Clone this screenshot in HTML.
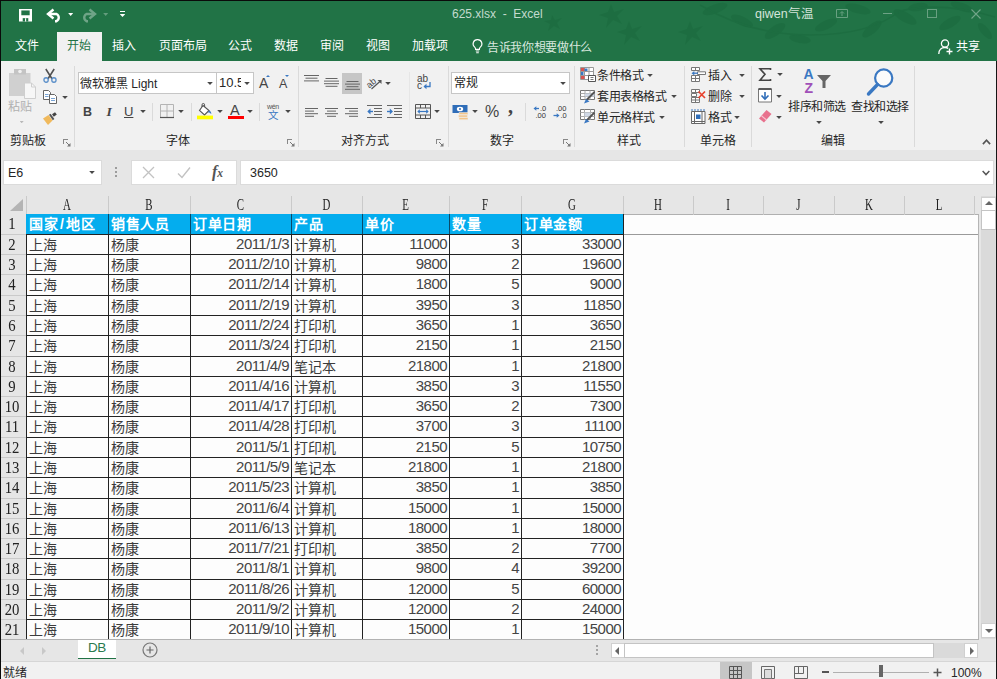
<!DOCTYPE html>
<html lang="zh-CN">
<head>
<meta charset="utf-8">
<title>625.xlsx - Excel</title>
<style>
*{box-sizing:border-box;margin:0;padding:0}
html,body{width:997px;height:679px;overflow:hidden;background:#e6e6e6}
body{position:relative;font-family:"Liberation Sans",sans-serif;font-size:12px;color:#262626}
.a{position:absolute}
.t{position:absolute;white-space:nowrap;font-size:12px;line-height:16px;height:16px;color:#262626;overflow:visible}
.w{color:#fff}
.sep{position:absolute;width:1px;background:#dadada}
.box{position:absolute;background:#fff;border:1px solid #c6c6c6}
svg{position:absolute;overflow:visible}
.dd{position:absolute;width:5.600px;height:3.100px;margin-left:.2px;background:#484848;clip-path:polygon(0 0,100% 0,50% 100%)}
.ch{text-align:center;font-family:"Liberation Serif",serif;font-size:16px;color:#222;transform:scaleX(.68)}
.rn{text-align:center;font-family:"Liberation Serif",serif;font-size:16px;color:#222;transform:scaleX(.92)}
.hc{font-size:14px;letter-spacing:.7px;color:#fff;font-weight:bold;line-height:18px;height:18px}
.c{font-size:14px;color:#3c3c3c;line-height:18px;height:18px}
.r{text-align:right;font-size:15px;letter-spacing:-.55px;color:#444}
.hl{left:26px;width:597px;height:1px;background:#222}
.vl{top:235px;width:1px;height:404px;background:#222}
</style>
</head>
<body>
<!-- ===== title bar + tabs ===== -->
<div class="a" id="titlebar" style="left:0;top:0;width:997px;height:61px;background:#217346"></div>
<div class="a" id="tabactive" style="left:57px;top:32px;width:45px;height:30px;background:#f1f1f1"></div>
<div class="t w" style="left:452px;top:6px;font-size:12px;color:#c4dbce">625.xlsx&nbsp; -&nbsp; Excel</div>
<div class="t w" style="left:755px;top:6px;font-size:12.5px;color:#d3e4da">qiwen气温</div>
<div class="t w" style="left:15px;top:38px">文件</div>
<div class="t" style="left:67px;top:38px;color:#217346">开始</div>
<div class="t w" style="left:112px;top:38px">插入</div>
<div class="t w" style="left:159px;top:38px">页面布局</div>
<div class="t w" style="left:228px;top:38px">公式</div>
<div class="t w" style="left:274px;top:38px">数据</div>
<div class="t w" style="left:320px;top:38px">审阅</div>
<div class="t w" style="left:366px;top:38px">视图</div>
<div class="t w" style="left:412px;top:38px">加载项</div>
<div class="t w" style="left:487px;top:39.500px;letter-spacing:-.35px;color:#d9e8df">告诉我你想要做什么</div>
<div class="t w" style="left:956px;top:39px">共享</div>
<!-- decorative background pattern (birds / leaves) -->
<svg style="left:0;top:1px" width="997" height="60" viewBox="0 0 997 60">
<g fill="#1b6a3e" opacity=".6" style="filter:blur(.7px)">
<!-- birds -->
<path id="bd" d="M552 14l3 5 7-2-5 5 3 6-6-3-6 5 2-7-6-3 7-1z"/>
<path d="M611 3l3 8 10-3-7 7 5 8-9-4-7 8 2-10-9-3 9-3z"/>
<path d="M629 20l3 8 10-3-7 7 5 8-9-4-7 8 2-10-9-3 9-3z"/>
<path d="M690 20l3 8 10-3-7 7 5 8-9-4-7 8 2-10-9-3 9-3z"/>
<!-- leaves -->
<ellipse cx="715" cy="8" rx="13" ry="4.500" transform="rotate(-20 715 8)"/>
<ellipse cx="742" cy="20" rx="12" ry="4.500" transform="rotate(25 742 20)"/>
<ellipse cx="775" cy="30" rx="12" ry="5" transform="rotate(-35 775 30)"/>
<ellipse cx="800" cy="38" rx="11" ry="4" transform="rotate(10 800 38)"/>
<ellipse cx="826" cy="24" rx="12" ry="4.500" transform="rotate(-25 826 24)"/>
<ellipse cx="858" cy="8" rx="13" ry="4.500" transform="rotate(15 858 8)"/>
<ellipse cx="872" cy="28" rx="12" ry="4.500" transform="rotate(-40 872 28)"/>
<ellipse cx="905" cy="16" rx="13" ry="5" transform="rotate(30 905 16)"/>
<ellipse cx="918" cy="6" rx="10" ry="4" transform="rotate(-10 918 6)"/>
<ellipse cx="950" cy="22" rx="12" ry="4.500" transform="rotate(-30 950 22)"/>
<ellipse cx="962" cy="6" rx="12" ry="4" transform="rotate(20 962 6)"/>
<ellipse cx="985" cy="30" rx="10" ry="4" transform="rotate(50 985 30)"/>
<path d="M700 4q50 30 110 30t90-24q40-10 95 6" stroke="#1b6a3e" stroke-width="1.600" fill="none"/>
</g></svg>
<!-- save -->
<svg style="left:19px;top:8.500px" width="13" height="12.500" viewBox="0 0 14 13" preserveAspectRatio="none"><path d="M0 0h14v13H0z" fill="#fff"/><path d="M2.500 1.500h9v5h-9z" fill="#217346"/><path d="M4 9.500h6V13H4z" fill="#217346"/><path d="M6.500 9.500h1.200V13H6.500z" fill="#fff"/></svg>
<!-- undo -->
<svg style="left:47px;top:9px" width="16" height="13" viewBox="0 0 16 13"><path d="M6.500 0.500L1 5l5.500 4.500" fill="none" stroke="#fff" stroke-width="2.400" stroke-linejoin="miter"/><path d="M2 5h7.500a4 4 0 0 1 0 7.200H8" fill="none" stroke="#fff" stroke-width="2.400"/></svg>
<div class="dd" style="left:68px;top:13px;background:#fff;width:5px"></div>
<!-- redo (disabled) -->
<svg style="left:79.500px;top:9px;opacity:.35" width="16" height="13" viewBox="0 0 16 13"><g transform="translate(16,0) scale(-1,1)"><path d="M6.500 0.500L1 5l5.500 4.500" fill="none" stroke="#fff" stroke-width="2.400"/><path d="M2 5h7.500a4 4 0 0 1 0 7.200H8" fill="none" stroke="#fff" stroke-width="2.400"/></g></svg>
<div class="dd" style="left:103px;top:13px;background:#fff;opacity:.3;width:5px"></div>
<!-- customize QAT -->
<div class="a" style="left:120px;top:11px;width:5px;height:1px;background:#fff"></div>
<div class="dd" style="left:119.500px;top:14px;background:#fff"></div>
<!-- bulb -->
<svg style="left:472px;top:39px" width="11" height="15" viewBox="0 0 11 15"><path d="M5.500 .6a4.300 4.300 0 0 0-2.600 7.800c.5.500.7 1.200.7 2h3.800c0-.8.200-1.500.7-2A4.300 4.300 0 0 0 5.500.6z" fill="none" stroke="#fff" stroke-width="1.100"/><path d="M3.800 12h3.400M4.200 13.800h2.600" stroke="#fff" stroke-width="1.100"/></svg>
<!-- share icon -->
<svg style="left:938px;top:39px" width="15" height="16" viewBox="0 0 15 16"><circle cx="7" cy="4.500" r="3.600" fill="none" stroke="#fff" stroke-width="1.300"/><path d="M.8 15c0-4.500 3-6.500 6.200-6.500 1.200 0 2.300.3 3.200.9" fill="none" stroke="#fff" stroke-width="1.300"/><path d="M11.500 9.500v6M8.500 12.500h6" stroke="#fff" stroke-width="1.400"/></svg>
<!-- window controls -->
<svg style="left:836px;top:9px;opacity:.32" width="12" height="9" viewBox="0 0 12 9"><path d="M.5.500h11v8H.5z" fill="none" stroke="#fff"/><path d="M6 7v-4M4 4.500l2-2 2 2" fill="none" stroke="#fff"/></svg>
<div class="a" style="left:883px;top:13px;width:9px;height:1px;background:#fff;opacity:.34"></div>
<div class="a" style="left:927px;top:9px;width:10px;height:9px;border:1px solid #fff;opacity:.32"></div>
<svg style="left:971px;top:8.500px;opacity:.36" width="10" height="10" viewBox="0 0 10 10"><path d="M.5.500l9 9M9.500.500l-9 9" stroke="#fff" stroke-width="1.100"/></svg>
<!-- ===== ribbon ===== -->
<div class="a" id="ribbon" style="left:1px;top:61px;width:995px;height:89px;background:#f1f1f1"></div>
<!-- separators -->
<div class="sep" style="left:74px;top:66px;height:81px"></div>
<div class="sep" style="left:298px;top:66px;height:81px"></div>
<div class="sep" style="left:448px;top:66px;height:81px"></div>
<div class="sep" style="left:574px;top:66px;height:81px"></div>
<div class="sep" style="left:684px;top:66px;height:81px"></div>
<div class="sep" style="left:751px;top:66px;height:81px"></div>
<div class="sep" style="left:914px;top:66px;height:81px"></div>
<div class="sep" style="left:152px;top:103px;height:18px;background:#dadada"></div>
<div class="sep" style="left:191px;top:103px;height:18px;background:#dadada"></div>
<div class="sep" style="left:259px;top:103px;height:18px;background:#dadada"></div>
<div class="sep" style="left:409px;top:72px;height:48px;background:#e6e6e6"></div>
<div class="sep" style="left:525px;top:103px;height:18px;background:#dadada"></div>
<!-- group labels -->
<div class="t" style="left:10px;top:133px">剪贴板</div>
<div class="t" style="left:166px;top:133px">字体</div>
<div class="t" style="left:341px;top:133px">对齐方式</div>
<div class="t" style="left:490px;top:133px">数字</div>
<div class="t" style="left:617px;top:133px">样式</div>
<div class="t" style="left:700px;top:133px">单元格</div>
<div class="t" style="left:821px;top:133px">编辑</div>
<!-- clipboard -->
<div class="t" style="left:8px;top:99px;color:#b0b0b0">粘贴</div>
<div class="dd" style="left:19.500px;top:121px;background:#b8b8b8;width:4px;height:2.200px"></div>
<div class="dd" style="left:62px;top:96px"></div>
<!-- font boxes -->
<div class="box" style="left:78px;top:72px;width:139px;height:22px"></div>
<div class="box" style="left:216px;top:72px;width:38px;height:22px"></div>
<div class="t" style="left:80px;top:75.500px;font-size:12px">微软雅黑 Light</div>
<div class="dd" style="left:207px;top:82px"></div>
<div class="t" style="left:219px;top:75px;font-size:13px;width:22px;overflow:hidden">10.5</div>
<div class="dd" style="left:244px;top:82px"></div>
<div class="t" style="left:83px;top:103.500px;font-size:12.500px;font-weight:bold;color:#444">B</div>
<div class="t" style="left:106.500px;top:103.500px;font-size:13.500px;font-weight:bold;font-style:italic;color:#444;font-family:'Liberation Serif',serif">I</div>
<div class="t" style="left:124px;top:103.500px;font-size:13px;text-decoration:underline;color:#444">U</div>
<div class="dd" style="left:140px;top:110px"></div>
<div class="dd" style="left:178px;top:110px"></div>
<div class="dd" style="left:217px;top:110px"></div>
<div class="dd" style="left:247px;top:110px"></div>
<div class="dd" style="left:285px;top:110px"></div>
<!-- alignment -->
<div class="a" style="left:342px;top:73px;width:20px;height:21px;background:#c6c6c6"></div>
<div class="dd" style="left:385px;top:82px"></div>
<div class="dd" style="left:434px;top:110px"></div>
<!-- number -->
<div class="box" style="left:451px;top:72px;width:119px;height:22px"></div>
<div class="t" style="left:454px;top:75px">常规</div>
<div class="dd" style="left:560px;top:82px"></div>
<div class="dd" style="left:472px;top:110px"></div>
<div class="t" style="left:485px;top:102px;font-size:16px;line-height:20px;height:20px;color:#444">%</div>
<div class="t" style="left:508px;top:96px;font-size:20px;line-height:20px;height:20px;font-weight:bold;color:#444;font-family:'Liberation Serif',serif">,</div>
<!-- styles -->
<div class="t" style="left:597px;top:68px;letter-spacing:-.4px">条件格式</div><div class="dd" style="left:647px;top:74px"></div>
<div class="t" style="left:597px;top:89px;letter-spacing:-.4px">套用表格格式</div><div class="dd" style="left:671px;top:95px"></div>
<div class="t" style="left:597px;top:110px;letter-spacing:-.4px">单元格样式</div><div class="dd" style="left:659px;top:116px"></div>
<!-- cells -->
<div class="t" style="left:708px;top:68px">插入</div><div class="dd" style="left:739px;top:74px"></div>
<div class="t" style="left:708px;top:89px">删除</div><div class="dd" style="left:739px;top:95px"></div>
<div class="t" style="left:708px;top:110px">格式</div><div class="dd" style="left:734px;top:116px"></div>
<!-- editing -->
<div class="dd" style="left:777px;top:73px"></div>
<div class="dd" style="left:776px;top:95px"></div>
<div class="dd" style="left:776px;top:116px"></div>
<div class="t" style="left:788px;top:99px;letter-spacing:-.4px">排序和筛选</div><div class="dd" style="left:816px;top:121px"></div>
<div class="t" style="left:851px;top:99px;letter-spacing:-.4px">查找和选择</div><div class="dd" style="left:878px;top:121px"></div>
<!-- clipboard icons -->
<svg style="left:9px;top:68.700px" width="28" height="30" viewBox="0 0 28 30">
<path d="M0 4h21.500v23H0z" fill="#d0d0d0"/><path d="M5 0h12v5.500H5z" fill="#c4c4c4"/><circle cx="11" cy="2.500" r="1.800" fill="#f1f1f1"/>
<path d="M15.500 14h7l4 4v11.500h-11z" fill="#f7f7f7" stroke="#cfcfcf"/><path d="M22.500 14v4h4" fill="none" stroke="#cfcfcf"/></svg>
<!-- scissors -->
<svg style="left:42.500px;top:68.700px" width="14" height="14" preserveAspectRatio="none" viewBox="0 0 15 14"><path d="M3 0l6.800 10M12 0L5.200 10" stroke="#505050" stroke-width="1.700" fill="none"/><circle cx="3.300" cy="11" r="2.300" fill="none" stroke="#5b8fc9" stroke-width="1.400"/><circle cx="11.700" cy="11" r="2.300" fill="none" stroke="#5b8fc9" stroke-width="1.400"/></svg>
<!-- copy -->
<svg style="left:43px;top:90px" width="14" height="14" viewBox="0 0 14 14"><path d="M.5.500h5l2 2v7h-7z" fill="#fff" stroke="#666"/><path d="M2 4.500h3.500M2 6.500h3.500" stroke="#6a9ad0" stroke-width=".9"/><path d="M6.500 4.500h5l2 2v7h-7z" fill="#fff" stroke="#666"/><path d="M8 8.500h4M8 10.500h4" stroke="#6a9ad0" stroke-width=".9"/></svg>
<!-- format painter -->
<svg style="left:43px;top:112px" width="14" height="13" viewBox="0 0 14 13"><path d="M0 6.500L5.500 3l4 5.500L5 13z" fill="#f0b95c"/><path d="M6 2.800l3.800 5.400 1.600-1.200L7.600 1.700z" fill="#555"/><path d="M9 2.200L12 .2l1.800 2.300-3 2.200z" fill="#444"/></svg>
<!-- font grow / shrink -->
<div class="t" style="left:259px;top:74px;font-size:14px;line-height:18px;height:18px;color:#444">A</div>
<div class="a" style="left:266px;top:75px;width:0;height:0;border-left:2.500px solid transparent;border-right:2.500px solid transparent;border-bottom:2.500px solid #3a78c2"></div>
<div class="t" style="left:279px;top:75px;font-size:12.5px;line-height:18px;height:18px;color:#444">A</div>
<div class="a" style="left:285px;top:75px;width:0;height:0;border-left:2.500px solid transparent;border-right:2.500px solid transparent;border-top:2.500px solid #3a78c2"></div>
<!-- borders -->
<svg style="left:160px;top:104px" width="14" height="14" viewBox="0 0 14 14"><path d="M.5.500h13v13H.5zM7 .5v13M.5 7h13" fill="none" stroke="#b4b4b4"/><path d="M0 13.500h14" stroke="#555" stroke-width="1.200"/></svg>
<!-- fill colour -->
<svg style="left:197px;top:104px" width="17" height="16" viewBox="0 0 17 16"><path d="M6 1.500l6 5-4.500 4.500-5-4.500z" fill="#fff" stroke="#555" stroke-width="1.100"/><path d="M5 3V.8a1.300 1.300 0 0 1 2.600 0V3" fill="none" stroke="#555"/><path d="M12 6.500c1.500.3 2.400 1.600 2.300 3.600-1-1.200-2-1.800-3.300-1.600z" fill="#3a78c2"/><path d="M0 11.600h16v3.700H0z" fill="#ffff00"/></svg>
<!-- font colour -->
<div class="t" style="left:230px;top:101px;font-size:14.5px;line-height:18px;height:18px;color:#444">A</div>
<div class="a" style="left:228px;top:115.600px;width:15.500px;height:3.700px;background:#ff0000"></div>
<!-- phonetic -->
<div class="t" style="left:267px;top:101.500px;font-size:7px;line-height:9px;height:9px;color:#555;letter-spacing:-.3px">wén</div>
<div class="t" style="left:268px;top:110px;font-size:10.500px;line-height:11px;height:11px;color:#3a78c2">文</div>
<!-- vertical alignment -->
<svg style="left:304px;top:75px" width="15" height="7" viewBox="0 0 15 7"><path d="M0 .5h15M1.500 3.200h12M0 5.900h15" stroke="#666" stroke-width="1"/></svg>
<svg style="left:324px;top:78px" width="15" height="9" viewBox="0 0 15 9"><path d="M1.500 .5h12M0 3.100h15M0 5.700h15M1.500 8.300h12" stroke="#666" stroke-width="1"/></svg>
<svg style="left:345px;top:81px" width="15" height="9" viewBox="0 0 15 9"><path d="M1.500 .5h12M0 3.100h15M1.500 5.700h12M0 8.300h15" stroke="#666" stroke-width="1"/></svg>
<!-- orientation -->
<svg style="left:367px;top:76px" width="16" height="14" viewBox="0 0 16 14"><g transform="rotate(-40 6 6)"><text x="-1" y="8.500" font-family="Liberation Sans, sans-serif" font-size="9" fill="#444">ab</text></g><path d="M4.500 13L14 4.500" stroke="#555" stroke-width="1.200" fill="none"/><path d="M10.500 4h4v4z" fill="#555"/></svg>
<!-- wrap text -->
<div class="t" style="left:417px;top:73px;font-size:10px;line-height:12px;height:12px;color:#444">ab</div>
<div class="t" style="left:417px;top:80px;font-size:10px;line-height:12px;height:12px;color:#444">c</div>
<svg style="left:423px;top:82px" width="8" height="8" viewBox="0 0 8 8"><path d="M7 0v4.500H1.500" fill="none" stroke="#3a78c2" stroke-width="1.300"/><path d="M3.500 1.800L.5 4.500l3 2.700z" fill="#3a78c2"/></svg>
<!-- horizontal alignment -->
<svg style="left:305px;top:108px" width="13" height="9" viewBox="0 0 13 9"><path d="M0 .5h13M0 3.100h9M0 5.700h13M0 8.300h9" stroke="#666"/></svg>
<svg style="left:325px;top:108px" width="13" height="9" viewBox="0 0 13 9"><path d="M0 .5h13M2 3.100h9M0 5.700h13M2 8.300h9" stroke="#666"/></svg>
<svg style="left:345px;top:108px" width="13" height="9" viewBox="0 0 13 9"><path d="M0 .5h13M4 3.100h9M0 5.700h13M4 8.300h9" stroke="#666"/></svg>
<!-- indents -->
<svg style="left:367px;top:105px" width="15" height="13" viewBox="0 0 15 13"><path d="M0 .5h15M7 3.500h8M7 6.500h8M7 9.500h8M0 12.500h15" stroke="#666"/><path d="M6 6.500H1.500" stroke="#3a78c2" stroke-width="1.400"/><path d="M3.500 3.500L.3 6.500l3.200 3z" fill="#3a78c2"/></svg>
<svg style="left:387px;top:105px" width="15" height="13" viewBox="0 0 15 13"><path d="M0 .5h15M7 3.500h8M7 6.500h8M7 9.500h8M0 12.500h15" stroke="#666"/><path d="M0 6.500h4.500" stroke="#3a78c2" stroke-width="1.400"/><path d="M2.800 3.500L6 6.500l-3.200 3z" fill="#3a78c2"/></svg>
<!-- merge & centre -->
<svg style="left:415px;top:104px" width="16" height="15" viewBox="0 0 16 15"><path d="M.5.500h15v14H.5zM.5 4h15M.5 11h15M5.500.5V4M10.500.5V4M5.500 11v3.500M10.500 11v3.500" fill="none" stroke="#555"/><path d="M3.500 7.500h9" stroke="#3a78c2" stroke-width="1.200"/><path d="M4.800 5.300L2.300 7.500l2.500 2.200zM11.200 5.300l2.500 2.200-2.500 2.200z" fill="#3a78c2"/></svg>
<!-- currency -->
<svg style="left:452px;top:104px" width="17" height="16" viewBox="0 0 17 16"><path d="M.5 1h15v8H.5z" fill="#2f6db8"/><ellipse cx="8" cy="5" rx="3.200" ry="2.300" fill="#fff"/><circle cx="8" cy="5" r="1" fill="#2f6db8"/><path d="M7 8.500h9v2.200H7zM6.500 11h9v2.200h-9zM7 13.500h9v2.200H7z" fill="#f3c58a" stroke="#f1f1f1" stroke-width=".5"/></svg>
<!-- decimals -->
<svg style="left:533px;top:105px" width="14" height="14" viewBox="0 0 14 14"><text x="7" y="6" font-family="Liberation Sans, sans-serif" font-size="7.500" fill="#333">.0</text><text x="2.500" y="13" font-family="Liberation Sans, sans-serif" font-size="7.500" fill="#333">.00</text><path d="M6 3.500H2" stroke="#3a78c2" stroke-width="1.300"/><path d="M3.300 1.200L.5 3.500l2.800 2.300z" fill="#3a78c2"/></svg>
<svg style="left:553px;top:105px" width="14" height="14" viewBox="0 0 14 14"><text x="3" y="6" font-family="Liberation Sans, sans-serif" font-size="7.500" fill="#333">.00</text><text x="7.500" y="13" font-family="Liberation Sans, sans-serif" font-size="7.500" fill="#333">.0</text><path d="M.5 10.500h4" stroke="#3a78c2" stroke-width="1.300"/><path d="M3.700 8.200l2.800 2.300-2.800 2.300z" fill="#3a78c2"/></svg>
<!-- styles icons -->
<svg style="left:580px;top:67px" width="16" height="15" viewBox="0 0 16 15"><path d="M.5.500h13v12H.5zM4.500.5v12M9 .5v12M.5 4.500h13M.5 8.500h13" fill="#fff" stroke="#999"/><path d="M1 1h3.500v3H1z" fill="#d9534f"/><path d="M1 5h2.500v3H1z" fill="#3a78c2"/><path d="M1 9h3.500v3H1z" fill="#d9534f"/><path d="M4.500 1.500h3v2.500h-3z" fill="#3a78c2"/><path d="M8.500 8.500h7v6h-7z" fill="#fff" stroke="#555"/><path d="M10.500 12.500h3M10.500 10.500h3" stroke="#555" stroke-width=".8"/></svg>
<svg style="left:580px;top:90px" width="16" height="14" viewBox="0 0 16 14"><path d="M.5.500h14v9H.5z" fill="#fff" stroke="#777"/><path d="M.5 3.500h14M.5 6.500h14M5 .5v9M10 .5v9" stroke="#aaa" fill="none"/><path d="M5 3.500h9.500v3H5z" fill="#cfd8e6"/><path d="M14.500 2l-8 8" stroke="#555" stroke-width="1.800"/><path d="M4 13.500l2-4.500 3.500 2.500z" fill="#3a78c2"/></svg>
<svg style="left:580px;top:109px" width="16" height="15" viewBox="0 0 16 15"><path d="M.5.500h14v10H.5z" fill="#fff" stroke="#777"/><path d="M.5 3.500h14M.5 7.500h14M4.500.5v10M10.500.5v10" stroke="#aaa" fill="none"/><path d="M4.500 3.500h6v4h-6z" fill="#cfd8e6"/><path d="M14.500 3.500l-8 8" stroke="#555" stroke-width="1.800"/><path d="M4 14.500l2-4.500 3.500 2.500z" fill="#3a78c2"/></svg>
<!-- cells icons -->
<svg style="left:691px;top:67px" width="15" height="15" viewBox="0 0 15 15"><path d="M.5.500h8v3h-8zM4.500.5v3M.5 8.500h8v6h-8zM4.500 8.500v6M.5 11.500h8" fill="#fff" stroke="#777"/><path d="M6.500 4.800h8v2.700h-8z" fill="#fff" stroke="#777"/><path d="M7 6.200H2" stroke="#3a78c2" stroke-width="1.300"/><path d="M3.300 4L.5 6.200l2.800 2.200z" fill="#3a78c2"/></svg>
<svg style="left:691px;top:89px" width="15" height="14" viewBox="0 0 15 14"><path d="M.5.500h8v3h-8zM4.500.5v3M.5 4.500h5v3h-5zM.5 8.500h8v5h-8zM4.500 8.500v5M.5 11h8" fill="#fff" stroke="#777"/><path d="M7.500 2.500l6.500 6.500M14 2.500L7.500 9" stroke="#e8412c" stroke-width="1.700"/></svg>
<svg style="left:691px;top:109px" width="15" height="15" viewBox="0 0 15 15"><path d="M0 1h15" stroke="#3a78c2" stroke-dasharray="2 1"/><path d="M.5 2.500h13.500v10H.5zM3.500 2.500v12M11 2.500v12M.5 12.500v2h13.500v-2" fill="#fff" stroke="#666"/><path d="M5 5.500h4.500v4.500H5z" fill="#2f6db8"/></svg>
<!-- editing icons -->
<svg style="left:759px;top:68px" width="13" height="13" viewBox="0 0 13 13"><path d="M11.500 2V.8H1l5 5.500-5 5.900h10.500V11" fill="none" stroke="#444" stroke-width="1.600"/></svg>
<svg style="left:758px;top:88px" width="14" height="15" viewBox="0 0 14 15"><path d="M.5 1h13v13H.5z" fill="#fff" stroke="#777"/><path d="M.5 1h13" stroke="#444" stroke-width="1.600"/><path d="M7 4v6" stroke="#2f6db8" stroke-width="1.600"/><path d="M3.500 7.500L7 11l3.500-3.500" fill="none" stroke="#2f6db8" stroke-width="1.600"/></svg>
<svg style="left:759px;top:110px" width="13" height="13" viewBox="0 0 13 13"><path d="M0 8.500L7.500 0 12.500 4 5 12.500z" fill="#e8718d"/><path d="M2.500 5.800l5 4.200" stroke="#f6c2cf" stroke-width="1.200"/></svg>
<!-- sort & filter -->
<div class="t" style="left:803.500px;top:66px;font-size:14px;line-height:16px;height:16px;color:#3a78c2;font-weight:bold">A</div>
<div class="t" style="left:804.500px;top:80px;font-size:14px;line-height:16px;height:16px;color:#a050b8;font-weight:bold">Z</div>
<svg style="left:817px;top:75px" width="14" height="13" viewBox="0 0 14 13"><path d="M0 0h14L8.500 6v7h-3V6z" fill="#666"/></svg>
<!-- find & select -->
<svg style="left:866px;top:67px" width="28" height="29" viewBox="0 0 28 29"><circle cx="17.700" cy="11" r="8.600" fill="#fbfbfb" stroke="#3a78c2" stroke-width="2.200"/><path d="M11.500 17.500L2.500 27" stroke="#3a78c2" stroke-width="3.400" stroke-linecap="round"/></svg>
<!-- dialog launchers -->
<svg style="left:63px;top:139px" width="8" height="8" viewBox="0 0 8 8"><path d="M0 .5h5M.5 0v5" stroke="#888" fill="none"/><path d="M3 3l4 4" stroke="#777"/><path d="M7.500 4v3.500H4z" fill="#777"/></svg>
<svg style="left:287px;top:139px" width="8" height="8" viewBox="0 0 8 8"><path d="M0 .5h5M.5 0v5" stroke="#888" fill="none"/><path d="M3 3l4 4" stroke="#777"/><path d="M7.500 4v3.500H4z" fill="#777"/></svg>
<svg style="left:436px;top:139px" width="8" height="8" viewBox="0 0 8 8"><path d="M0 .5h5M.5 0v5" stroke="#888" fill="none"/><path d="M3 3l4 4" stroke="#777"/><path d="M7.500 4v3.500H4z" fill="#777"/></svg>
<svg style="left:563px;top:139px" width="8" height="8" viewBox="0 0 8 8"><path d="M0 .5h5M.5 0v5" stroke="#888" fill="none"/><path d="M3 3l4 4" stroke="#777"/><path d="M7.500 4v3.500H4z" fill="#777"/></svg>
<!-- collapse ribbon caret -->
<svg style="left:981.500px;top:139px" width="9" height="6" viewBox="0 0 10 7"><path d="M.8 6L5 1.500 9.200 6" fill="none" stroke="#555" stroke-width="1.900"/></svg>
<!-- ===== formula bar ===== -->
<div class="box" style="left:3px;top:160px;width:99px;height:25px;border-color:#dbdbdb"></div>
<div class="t" style="left:8px;top:165px;font-size:12.5px">E6</div>
<div class="dd" style="left:89px;top:171px"></div>
<div class="a" style="left:115px;top:167px;width:2px;height:2px;background:#9c9c9c;box-shadow:0 4px 0 #9c9c9c,0 8px 0 #9c9c9c"></div>
<div class="box" style="left:131px;top:160px;width:106px;height:25px;border-color:#dbdbdb"></div>
<div class="box" style="left:240px;top:160px;width:754px;height:25px;border-color:#dbdbdb"></div>
<div class="t" style="left:250px;top:165px;font-size:12.5px">3650</div>
<div class="t" style="left:212px;top:164px;font-size:16px;font-weight:bold;font-style:italic;font-family:'Liberation Serif',serif;color:#555">f<span style="font-size:11.500px">x</span></div>
<!-- ===== grid ===== -->
<div class="a" id="colhdr" style="left:1px;top:195px;width:980px;height:20px;background:#e6e6e6"></div>
<div class="a" id="sheet" style="left:26px;top:214px;width:953px;height:426px;background:#fdfdfd;border-right:1px solid #b5b5b5;border-top:1px solid #b0b0b0"></div>
<div class="a" style="left:10px;top:199px;width:0;height:0;border-left:13px solid transparent;border-bottom:12px solid #b4b4b4"></div>
<div class="t ch" style="left:26px;top:197px;width:82px">A</div>
<div class="a" style="left:26px;top:196px;width:1px;height:19px;background:#cacaca"></div>
<div class="t ch" style="left:108px;top:197px;width:82px">B</div>
<div class="a" style="left:108px;top:196px;width:1px;height:19px;background:#cacaca"></div>
<div class="t ch" style="left:190px;top:197px;width:101px">C</div>
<div class="a" style="left:190px;top:196px;width:1px;height:19px;background:#cacaca"></div>
<div class="t ch" style="left:291px;top:197px;width:71px">D</div>
<div class="a" style="left:291px;top:196px;width:1px;height:19px;background:#cacaca"></div>
<div class="t ch" style="left:362px;top:197px;width:87px">E</div>
<div class="a" style="left:362px;top:196px;width:1px;height:19px;background:#cacaca"></div>
<div class="t ch" style="left:449px;top:197px;width:72px">F</div>
<div class="a" style="left:449px;top:196px;width:1px;height:19px;background:#cacaca"></div>
<div class="t ch" style="left:521px;top:197px;width:102px">G</div>
<div class="a" style="left:521px;top:196px;width:1px;height:19px;background:#cacaca"></div>
<div class="t ch" style="left:623px;top:197px;width:70px">H</div>
<div class="a" style="left:623px;top:196px;width:1px;height:19px;background:#cacaca"></div>
<div class="t ch" style="left:693px;top:197px;width:70px">I</div>
<div class="a" style="left:693px;top:196px;width:1px;height:19px;background:#cacaca"></div>
<div class="t ch" style="left:763px;top:197px;width:71px">J</div>
<div class="a" style="left:763px;top:196px;width:1px;height:19px;background:#cacaca"></div>
<div class="t ch" style="left:834px;top:197px;width:70px">K</div>
<div class="a" style="left:834px;top:196px;width:1px;height:19px;background:#cacaca"></div>
<div class="t ch" style="left:904px;top:197px;width:70px">L</div>
<div class="a" style="left:904px;top:196px;width:1px;height:19px;background:#cacaca"></div>
<div class="a" style="left:974px;top:196px;width:1px;height:19px;background:#cacaca"></div>
<div class="a" style="left:623px;top:234px;width:355px;height:1px;background:#9a9a9a"></div>
<div class="a" style="left:26px;top:214px;width:597px;height:21px;background:#04adee"></div>
<div class="t hc" style="left:29px;top:215px">国家<span style="padding:0 1.500px">/</span>地区</div>
<div class="t hc" style="left:111px;top:215px">销售人员</div>
<div class="a" style="left:108px;top:214px;width:1px;height:21px;background:#0b4a68"></div>
<div class="t hc" style="left:193px;top:215px">订单日期</div>
<div class="a" style="left:190px;top:214px;width:1px;height:21px;background:#0b4a68"></div>
<div class="t hc" style="left:294px;top:215px">产品</div>
<div class="a" style="left:291px;top:214px;width:1px;height:21px;background:#0b4a68"></div>
<div class="t hc" style="left:365px;top:215px">单价</div>
<div class="a" style="left:362px;top:214px;width:1px;height:21px;background:#0b4a68"></div>
<div class="t hc" style="left:452px;top:215px">数量</div>
<div class="a" style="left:449px;top:214px;width:1px;height:21px;background:#0b4a68"></div>
<div class="t hc" style="left:524px;top:215px">订单金额</div>
<div class="a" style="left:521px;top:214px;width:1px;height:21px;background:#0b4a68"></div>
<div class="t rn" style="left:1px;top:216px;width:22px">1</div>
<div class="a" style="left:1px;top:234px;width:25px;height:1px;background:#cacaca"></div>
<div class="t rn" style="left:1px;top:237px;width:22px">2</div>
<div class="a" style="left:1px;top:254px;width:25px;height:1px;background:#cacaca"></div>
<div class="t rn" style="left:1px;top:257px;width:22px">3</div>
<div class="a" style="left:1px;top:274px;width:25px;height:1px;background:#cacaca"></div>
<div class="t rn" style="left:1px;top:277px;width:22px">4</div>
<div class="a" style="left:1px;top:295px;width:25px;height:1px;background:#cacaca"></div>
<div class="t rn" style="left:1px;top:298px;width:22px">5</div>
<div class="a" style="left:1px;top:315px;width:25px;height:1px;background:#cacaca"></div>
<div class="t rn" style="left:1px;top:318px;width:22px">6</div>
<div class="a" style="left:1px;top:335px;width:25px;height:1px;background:#cacaca"></div>
<div class="t rn" style="left:1px;top:338px;width:22px">7</div>
<div class="a" style="left:1px;top:356px;width:25px;height:1px;background:#cacaca"></div>
<div class="t rn" style="left:1px;top:359px;width:22px">8</div>
<div class="a" style="left:1px;top:376px;width:25px;height:1px;background:#cacaca"></div>
<div class="t rn" style="left:1px;top:379px;width:22px">9</div>
<div class="a" style="left:1px;top:396px;width:25px;height:1px;background:#cacaca"></div>
<div class="t rn" style="left:1px;top:399px;width:22px">10</div>
<div class="a" style="left:1px;top:416px;width:25px;height:1px;background:#cacaca"></div>
<div class="t rn" style="left:1px;top:419px;width:22px">11</div>
<div class="a" style="left:1px;top:437px;width:25px;height:1px;background:#cacaca"></div>
<div class="t rn" style="left:1px;top:440px;width:22px">12</div>
<div class="a" style="left:1px;top:457px;width:25px;height:1px;background:#cacaca"></div>
<div class="t rn" style="left:1px;top:460px;width:22px">13</div>
<div class="a" style="left:1px;top:477px;width:25px;height:1px;background:#cacaca"></div>
<div class="t rn" style="left:1px;top:480px;width:22px">14</div>
<div class="a" style="left:1px;top:498px;width:25px;height:1px;background:#cacaca"></div>
<div class="t rn" style="left:1px;top:501px;width:22px">15</div>
<div class="a" style="left:1px;top:518px;width:25px;height:1px;background:#cacaca"></div>
<div class="t rn" style="left:1px;top:521px;width:22px">16</div>
<div class="a" style="left:1px;top:538px;width:25px;height:1px;background:#cacaca"></div>
<div class="t rn" style="left:1px;top:541px;width:22px">17</div>
<div class="a" style="left:1px;top:558px;width:25px;height:1px;background:#cacaca"></div>
<div class="t rn" style="left:1px;top:561px;width:22px">18</div>
<div class="a" style="left:1px;top:579px;width:25px;height:1px;background:#cacaca"></div>
<div class="t rn" style="left:1px;top:582px;width:22px">19</div>
<div class="a" style="left:1px;top:599px;width:25px;height:1px;background:#cacaca"></div>
<div class="t rn" style="left:1px;top:602px;width:22px">20</div>
<div class="a" style="left:1px;top:619px;width:25px;height:1px;background:#cacaca"></div>
<div class="t rn" style="left:1px;top:622px;width:22px">21</div>
<div class="a" style="left:1px;top:640px;width:25px;height:1px;background:#cacaca"></div>
<div class="a hl" style="top:234px"></div>
<div class="t c" style="left:29px;top:236px">上海</div>
<div class="t c" style="left:111px;top:236px">杨康</div>
<div class="t c r" style="left:190px;width:99px;top:235px">2011/1/3</div>
<div class="t c" style="left:294px;top:236px">计算机</div>
<div class="t c r" style="left:362px;width:85px;top:235px">11000</div>
<div class="t c r" style="left:449px;width:70px;top:235px">3</div>
<div class="t c r" style="left:521px;width:100px;top:235px">33000</div>
<div class="a hl" style="top:254px"></div>
<div class="t c" style="left:29px;top:256px">上海</div>
<div class="t c" style="left:111px;top:256px">杨康</div>
<div class="t c r" style="left:190px;width:99px;top:255px">2011/2/10</div>
<div class="t c" style="left:294px;top:256px">计算机</div>
<div class="t c r" style="left:362px;width:85px;top:255px">9800</div>
<div class="t c r" style="left:449px;width:70px;top:255px">2</div>
<div class="t c r" style="left:521px;width:100px;top:255px">19600</div>
<div class="a hl" style="top:274px"></div>
<div class="t c" style="left:29px;top:276px">上海</div>
<div class="t c" style="left:111px;top:276px">杨康</div>
<div class="t c r" style="left:190px;width:99px;top:275px">2011/2/14</div>
<div class="t c" style="left:294px;top:276px">计算机</div>
<div class="t c r" style="left:362px;width:85px;top:275px">1800</div>
<div class="t c r" style="left:449px;width:70px;top:275px">5</div>
<div class="t c r" style="left:521px;width:100px;top:275px">9000</div>
<div class="a hl" style="top:295px"></div>
<div class="t c" style="left:29px;top:297px">上海</div>
<div class="t c" style="left:111px;top:297px">杨康</div>
<div class="t c r" style="left:190px;width:99px;top:296px">2011/2/19</div>
<div class="t c" style="left:294px;top:297px">计算机</div>
<div class="t c r" style="left:362px;width:85px;top:296px">3950</div>
<div class="t c r" style="left:449px;width:70px;top:296px">3</div>
<div class="t c r" style="left:521px;width:100px;top:296px">11850</div>
<div class="a hl" style="top:315px"></div>
<div class="t c" style="left:29px;top:317px">上海</div>
<div class="t c" style="left:111px;top:317px">杨康</div>
<div class="t c r" style="left:190px;width:99px;top:316px">2011/2/24</div>
<div class="t c" style="left:294px;top:317px">打印机</div>
<div class="t c r" style="left:362px;width:85px;top:316px">3650</div>
<div class="t c r" style="left:449px;width:70px;top:316px">1</div>
<div class="t c r" style="left:521px;width:100px;top:316px">3650</div>
<div class="a hl" style="top:335px"></div>
<div class="t c" style="left:29px;top:337px">上海</div>
<div class="t c" style="left:111px;top:337px">杨康</div>
<div class="t c r" style="left:190px;width:99px;top:336px">2011/3/24</div>
<div class="t c" style="left:294px;top:337px">打印机</div>
<div class="t c r" style="left:362px;width:85px;top:336px">2150</div>
<div class="t c r" style="left:449px;width:70px;top:336px">1</div>
<div class="t c r" style="left:521px;width:100px;top:336px">2150</div>
<div class="a hl" style="top:356px"></div>
<div class="t c" style="left:29px;top:358px">上海</div>
<div class="t c" style="left:111px;top:358px">杨康</div>
<div class="t c r" style="left:190px;width:99px;top:357px">2011/4/9</div>
<div class="t c" style="left:294px;top:358px">笔记本</div>
<div class="t c r" style="left:362px;width:85px;top:357px">21800</div>
<div class="t c r" style="left:449px;width:70px;top:357px">1</div>
<div class="t c r" style="left:521px;width:100px;top:357px">21800</div>
<div class="a hl" style="top:376px"></div>
<div class="t c" style="left:29px;top:378px">上海</div>
<div class="t c" style="left:111px;top:378px">杨康</div>
<div class="t c r" style="left:190px;width:99px;top:377px">2011/4/16</div>
<div class="t c" style="left:294px;top:378px">计算机</div>
<div class="t c r" style="left:362px;width:85px;top:377px">3850</div>
<div class="t c r" style="left:449px;width:70px;top:377px">3</div>
<div class="t c r" style="left:521px;width:100px;top:377px">11550</div>
<div class="a hl" style="top:396px"></div>
<div class="t c" style="left:29px;top:398px">上海</div>
<div class="t c" style="left:111px;top:398px">杨康</div>
<div class="t c r" style="left:190px;width:99px;top:397px">2011/4/17</div>
<div class="t c" style="left:294px;top:398px">打印机</div>
<div class="t c r" style="left:362px;width:85px;top:397px">3650</div>
<div class="t c r" style="left:449px;width:70px;top:397px">2</div>
<div class="t c r" style="left:521px;width:100px;top:397px">7300</div>
<div class="a hl" style="top:416px"></div>
<div class="t c" style="left:29px;top:418px">上海</div>
<div class="t c" style="left:111px;top:418px">杨康</div>
<div class="t c r" style="left:190px;width:99px;top:417px">2011/4/28</div>
<div class="t c" style="left:294px;top:418px">打印机</div>
<div class="t c r" style="left:362px;width:85px;top:417px">3700</div>
<div class="t c r" style="left:449px;width:70px;top:417px">3</div>
<div class="t c r" style="left:521px;width:100px;top:417px">11100</div>
<div class="a hl" style="top:437px"></div>
<div class="t c" style="left:29px;top:439px">上海</div>
<div class="t c" style="left:111px;top:439px">杨康</div>
<div class="t c r" style="left:190px;width:99px;top:438px">2011/5/1</div>
<div class="t c" style="left:294px;top:439px">打印机</div>
<div class="t c r" style="left:362px;width:85px;top:438px">2150</div>
<div class="t c r" style="left:449px;width:70px;top:438px">5</div>
<div class="t c r" style="left:521px;width:100px;top:438px">10750</div>
<div class="a hl" style="top:457px"></div>
<div class="t c" style="left:29px;top:459px">上海</div>
<div class="t c" style="left:111px;top:459px">杨康</div>
<div class="t c r" style="left:190px;width:99px;top:458px">2011/5/9</div>
<div class="t c" style="left:294px;top:459px">笔记本</div>
<div class="t c r" style="left:362px;width:85px;top:458px">21800</div>
<div class="t c r" style="left:449px;width:70px;top:458px">1</div>
<div class="t c r" style="left:521px;width:100px;top:458px">21800</div>
<div class="a hl" style="top:477px"></div>
<div class="t c" style="left:29px;top:479px">上海</div>
<div class="t c" style="left:111px;top:479px">杨康</div>
<div class="t c r" style="left:190px;width:99px;top:478px">2011/5/23</div>
<div class="t c" style="left:294px;top:479px">计算机</div>
<div class="t c r" style="left:362px;width:85px;top:478px">3850</div>
<div class="t c r" style="left:449px;width:70px;top:478px">1</div>
<div class="t c r" style="left:521px;width:100px;top:478px">3850</div>
<div class="a hl" style="top:498px"></div>
<div class="t c" style="left:29px;top:500px">上海</div>
<div class="t c" style="left:111px;top:500px">杨康</div>
<div class="t c r" style="left:190px;width:99px;top:499px">2011/6/4</div>
<div class="t c" style="left:294px;top:500px">计算机</div>
<div class="t c r" style="left:362px;width:85px;top:499px">15000</div>
<div class="t c r" style="left:449px;width:70px;top:499px">1</div>
<div class="t c r" style="left:521px;width:100px;top:499px">15000</div>
<div class="a hl" style="top:518px"></div>
<div class="t c" style="left:29px;top:520px">上海</div>
<div class="t c" style="left:111px;top:520px">杨康</div>
<div class="t c r" style="left:190px;width:99px;top:519px">2011/6/13</div>
<div class="t c" style="left:294px;top:520px">计算机</div>
<div class="t c r" style="left:362px;width:85px;top:519px">18000</div>
<div class="t c r" style="left:449px;width:70px;top:519px">1</div>
<div class="t c r" style="left:521px;width:100px;top:519px">18000</div>
<div class="a hl" style="top:538px"></div>
<div class="t c" style="left:29px;top:540px">上海</div>
<div class="t c" style="left:111px;top:540px">杨康</div>
<div class="t c r" style="left:190px;width:99px;top:539px">2011/7/21</div>
<div class="t c" style="left:294px;top:540px">打印机</div>
<div class="t c r" style="left:362px;width:85px;top:539px">3850</div>
<div class="t c r" style="left:449px;width:70px;top:539px">2</div>
<div class="t c r" style="left:521px;width:100px;top:539px">7700</div>
<div class="a hl" style="top:558px"></div>
<div class="t c" style="left:29px;top:560px">上海</div>
<div class="t c" style="left:111px;top:560px">杨康</div>
<div class="t c r" style="left:190px;width:99px;top:559px">2011/8/1</div>
<div class="t c" style="left:294px;top:560px">计算机</div>
<div class="t c r" style="left:362px;width:85px;top:559px">9800</div>
<div class="t c r" style="left:449px;width:70px;top:559px">4</div>
<div class="t c r" style="left:521px;width:100px;top:559px">39200</div>
<div class="a hl" style="top:579px"></div>
<div class="t c" style="left:29px;top:581px">上海</div>
<div class="t c" style="left:111px;top:581px">杨康</div>
<div class="t c r" style="left:190px;width:99px;top:580px">2011/8/26</div>
<div class="t c" style="left:294px;top:581px">计算机</div>
<div class="t c r" style="left:362px;width:85px;top:580px">12000</div>
<div class="t c r" style="left:449px;width:70px;top:580px">5</div>
<div class="t c r" style="left:521px;width:100px;top:580px">60000</div>
<div class="a hl" style="top:599px"></div>
<div class="t c" style="left:29px;top:601px">上海</div>
<div class="t c" style="left:111px;top:601px">杨康</div>
<div class="t c r" style="left:190px;width:99px;top:600px">2011/9/2</div>
<div class="t c" style="left:294px;top:601px">计算机</div>
<div class="t c r" style="left:362px;width:85px;top:600px">12000</div>
<div class="t c r" style="left:449px;width:70px;top:600px">2</div>
<div class="t c r" style="left:521px;width:100px;top:600px">24000</div>
<div class="a hl" style="top:619px"></div>
<div class="t c" style="left:29px;top:621px">上海</div>
<div class="t c" style="left:111px;top:621px">杨康</div>
<div class="t c r" style="left:190px;width:99px;top:620px">2011/9/10</div>
<div class="t c" style="left:294px;top:621px">计算机</div>
<div class="t c r" style="left:362px;width:85px;top:620px">15000</div>
<div class="t c r" style="left:449px;width:70px;top:620px">1</div>
<div class="t c r" style="left:521px;width:100px;top:620px">15000</div>
<div class="a vl" style="left:26px"></div>
<div class="a vl" style="left:108px"></div>
<div class="a vl" style="left:190px"></div>
<div class="a vl" style="left:291px"></div>
<div class="a vl" style="left:362px"></div>
<div class="a vl" style="left:449px"></div>
<div class="a vl" style="left:521px"></div>
<div class="a vl" style="left:623px"></div>
<div class="a" style="left:623px;top:214px;width:1px;height:22px;background:#222"></div>
<!-- formula bar icons -->
<svg style="left:142px;top:166px" width="13" height="13" viewBox="0 0 13 13"><path d="M1 1l11 11M12 1L1 12" stroke="#c2c2c2" stroke-width="1.300"/></svg>
<svg style="left:177px;top:166px" width="14" height="13" viewBox="0 0 14 13"><path d="M1 7.500l4 4L13 1.500" fill="none" stroke="#c2c2c2" stroke-width="1.400"/></svg>
<svg style="left:982px;top:169.500px" width="8" height="6" viewBox="0 0 10 7"><path d="M.8 1L5 5.500 9.200 1" fill="none" stroke="#555" stroke-width="1.800"/></svg>
<!-- ===== scrollbars / sheet tabs / status ===== -->
<div class="a" id="vtrack" style="left:981px;top:196px;width:15px;height:443px;background:#dadada"></div>
<div class="a" style="left:981px;top:197px;width:15px;height:14px;background:#fff;border:1px solid #d0d0d0"></div>
<div class="a" style="left:985px;top:201px;width:0;height:0;border-left:4px solid transparent;border-right:4px solid transparent;border-bottom:4px solid #666"></div>
<div class="a" style="left:981px;top:210px;width:15px;height:20px;background:#fff;border:1px solid #c4c4c4"></div>
<div class="a" style="left:981px;top:623px;width:15px;height:15px;background:#fff;border:1px solid #d0d0d0"></div>
<div class="a" style="left:985px;top:629px;width:0;height:0;border-left:4px solid transparent;border-right:4px solid transparent;border-top:4px solid #666"></div>
<!-- tab bar -->
<div class="a" id="tabbar" style="left:1px;top:640px;width:995px;height:22px;background:#e6e6e6"></div>
<div class="a" style="left:1px;top:639px;width:978px;height:1px;background:#b2b2b2"></div>
<div class="a" style="left:78px;top:640px;width:38px;height:19px;background:#fff"></div>
<div class="a" style="left:78px;top:657.500px;width:38px;height:1.500px;background:#217346"></div>
<div class="t" style="left:88px;top:640px;font-size:13.500px;letter-spacing:-.6px;color:#2a7a4e">DB</div>
<div class="a" style="left:20px;top:647px;width:0;height:0;border-top:4px solid transparent;border-bottom:4px solid transparent;border-right:4px solid #c8c8c8"></div>
<div class="a" style="left:42px;top:647px;width:0;height:0;border-top:4px solid transparent;border-bottom:4px solid transparent;border-left:4px solid #c8c8c8"></div>
<svg style="left:142px;top:642px" width="16" height="16" viewBox="0 0 16 16"><circle cx="8" cy="8" r="7" fill="none" stroke="#777" stroke-width="1.2"/><path d="M4.5 8h7M8 4.5v7" stroke="#666" stroke-width="1.2" fill="none"/></svg>
<!-- h scroll -->
<div class="a" style="left:596px;top:645px;width:2px;height:2px;background:#a4a4a4;box-shadow:0 4px 0 #a4a4a4,0 8px 0 #a4a4a4"></div>
<div class="a" style="left:611px;top:643px;width:367px;height:15px;background:#dadada"></div>
<div class="a" style="left:611px;top:643px;width:14px;height:15px;background:#fff;border:1px solid #d0d0d0"></div>
<div class="a" style="left:615px;top:647px;width:0;height:0;border-top:4px solid transparent;border-bottom:4px solid transparent;border-right:4px solid #666"></div>
<div class="a" style="left:624px;top:643px;width:310px;height:15px;background:#fff;border:1px solid #c4c4c4"></div>
<div class="a" style="left:964px;top:643px;width:14px;height:15px;background:#fff;border:1px solid #d0d0d0"></div>
<div class="a" style="left:970px;top:647px;width:0;height:0;border-top:4px solid transparent;border-bottom:4px solid transparent;border-left:4px solid #666"></div>
<!-- status bar -->
<div class="a" id="status" style="left:1px;top:662px;width:995px;height:17px;background:#f1f1f1"></div>
<div class="a" style="left:1px;top:661px;width:995px;height:1px;background:#d6d6d6"></div>
<div class="t" style="left:3px;top:664.500px;font-size:12px">就绪</div>
<div class="a" style="left:720px;top:662px;width:32px;height:17px;background:#c6c6c6"></div>
<svg style="left:729px;top:666px" width="13" height="13" viewBox="0 0 13 13"><path d="M.5.5h12v12H.5zM4.5.5v12M8.5.5v12M.5 4.5h12M.5 8.5h12" stroke="#555" fill="none"/></svg>
<svg style="left:761px;top:666px" width="14" height="13" viewBox="0 0 14 13"><path d="M.5.5h13v12H.5z" stroke="#666" fill="none"/><path d="M3.5 3.5h7v9h-7z" stroke="#777" fill="#ddd"/></svg>
<svg style="left:794px;top:666px" width="14" height="13" viewBox="0 0 14 13"><path d="M.5.5h13v12H.5zM4.500.5v7M9.500.5v7M.5 7.500h9" stroke="#666" fill="none"/></svg>
<div class="a" style="left:821.500px;top:671.200px;width:7.500px;height:1.600px;background:#555"></div>
<div class="a" style="left:833px;top:672px;width:96px;height:1px;background:#b0b0b0"></div>
<div class="a" style="left:879px;top:665px;width:4px;height:12px;background:#666"></div>
<svg style="left:933px;top:667.500px" width="9" height="9" viewBox="0 0 9 9"><path d="M.5 4.500h8M4.500 .500v8" stroke="#555" stroke-width="1.500" fill="none"/></svg>
<div class="t" style="left:951px;top:664.500px;font-size:12px">100%</div>
<!-- window borders -->
<div class="a" style="left:0;top:0;width:997px;height:1px;background:#0a0a0a"></div>
<div class="a" style="left:0;top:0;width:1px;height:679px;background:#0a0a0a"></div>
<div class="a" style="left:996px;top:61px;width:1px;height:618px;background:#151515"></div>
</body>
</html>
